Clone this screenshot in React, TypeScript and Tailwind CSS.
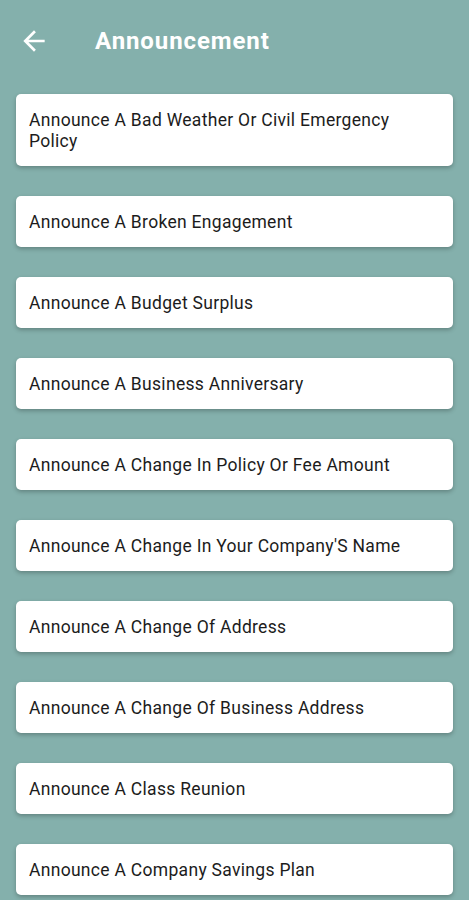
const items = [
  "Announce A Bad Weather Or Civil Emergency Policy",
  "Announce A Broken Engagement",
  "Announce A Budget Surplus",
  "Announce A Business Anniversary",
  "Announce A Change In Policy Or Fee Amount",
  "Announce A Change In Your Company'S Name",
  "Announce A Change Of Address",
  "Announce A Change Of Business Address",
  "Announce A Class Reunion",
  "Announce A Company Savings Plan",
];

const BackArrow = () => (
  <svg width="32" height="32" viewBox="0 0 24 24" fill="white">
    <path d="M20 11H7.83l5.59-5.59L12 4l-8 8 8 8 1.41-1.41L7.83 13H20v-2z" />
  </svg>
);

export default function App() {
  return (
    <div className="h-[900px] overflow-hidden bg-[#84b0ac] font-['Roboto',sans-serif]">
      <div className="h-[82px] flex items-center">
        <div className="ml-[18px] w-[32px]">
          <BackArrow />
        </div>
        <div className="ml-[45px] text-white text-[24px] font-bold tracking-[0.9px]">Announcement</div>
      </div>
      <div className="flex flex-col gap-[30px] px-4 pt-3">
        {items.map((item) => (
          <div
            key={item}
            className="bg-white rounded-[5px] pl-[13px] pr-[50px] pt-[16px] pb-[14px] text-[17.5px] leading-[21px] tracking-[0.3px] text-[#1c1c1c] shadow-[0_2px_4px_rgba(0,0,0,0.25)]"
          >
            {item}
          </div>
        ))}
      </div>
    </div>
  );
}
